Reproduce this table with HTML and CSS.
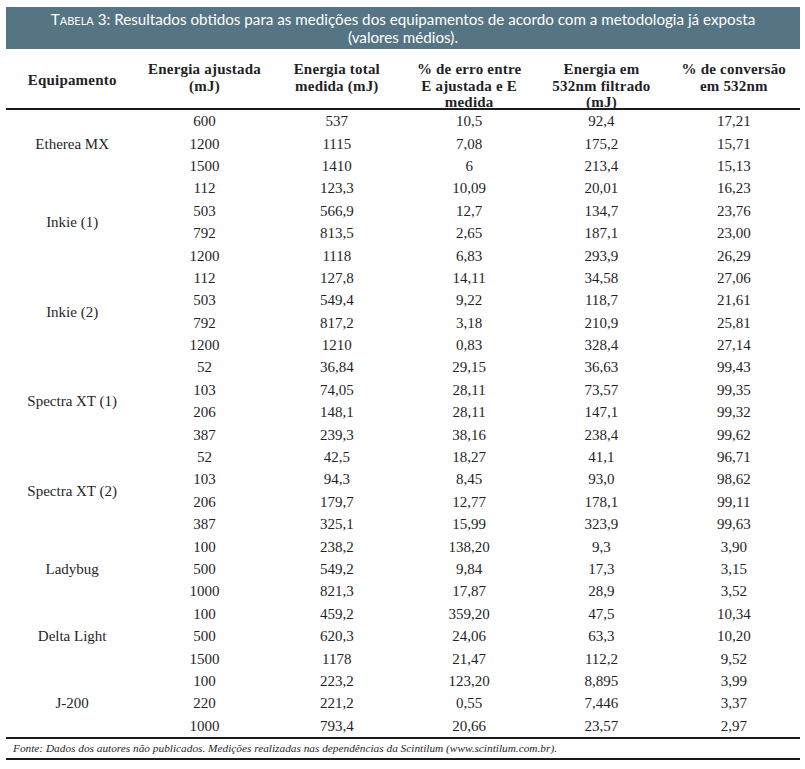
FILE: index.html
```html
<!DOCTYPE html>
<html lang="pt">
<head>
<meta charset="utf-8">
<title>Tabela 3</title>
<link rel="stylesheet" href="styles.css">
</head>
<body>
<div class="wrap">
  <div class="titlebar"><span class="sc">Tabela 3:</span> Resultados obtidos para as medições dos equipamentos de acordo com a metodologia já exposta<br>(valores médios).</div>
  <table class="data">
    <colgroup><col><col><col><col><col><col></colgroup>
    <thead>
      <tr>
        <th><div class="hd equip">Equipamento</div></th>
        <th><div class="hd">Energia ajustada<br>(mJ)</div></th>
        <th><div class="hd">Energia total<br>medida (mJ)</div></th>
        <th><div class="hd">% de erro entre<br>E ajustada e E<br>medida</div></th>
        <th><div class="hd">Energia em<br>532nm filtrado<br>(mJ)</div></th>
        <th><div class="hd">% de conversão<br>em 532nm</div></th>
      </tr>
    </thead>
    <tbody>
      <tr><td rowspan="3">Etherea MX</td><td>600</td><td>537</td><td>10,5</td><td>92,4</td><td>17,21</td></tr>
      <tr><td>1200</td><td>1115</td><td>7,08</td><td>175,2</td><td>15,71</td></tr>
      <tr><td>1500</td><td>1410</td><td>6</td><td>213,4</td><td>15,13</td></tr>
      <tr><td rowspan="4">Inkie (1)</td><td>112</td><td>123,3</td><td>10,09</td><td>20,01</td><td>16,23</td></tr>
      <tr><td>503</td><td>566,9</td><td>12,7</td><td>134,7</td><td>23,76</td></tr>
      <tr><td>792</td><td>813,5</td><td>2,65</td><td>187,1</td><td>23,00</td></tr>
      <tr><td>1200</td><td>1118</td><td>6,83</td><td>293,9</td><td>26,29</td></tr>
      <tr><td rowspan="4">Inkie (2)</td><td>112</td><td>127,8</td><td>14,11</td><td>34,58</td><td>27,06</td></tr>
      <tr><td>503</td><td>549,4</td><td>9,22</td><td>118,7</td><td>21,61</td></tr>
      <tr><td>792</td><td>817,2</td><td>3,18</td><td>210,9</td><td>25,81</td></tr>
      <tr><td>1200</td><td>1210</td><td>0,83</td><td>328,4</td><td>27,14</td></tr>
      <tr><td rowspan="4">Spectra XT (1)</td><td>52</td><td>36,84</td><td>29,15</td><td>36,63</td><td>99,43</td></tr>
      <tr><td>103</td><td>74,05</td><td>28,11</td><td>73,57</td><td>99,35</td></tr>
      <tr><td>206</td><td>148,1</td><td>28,11</td><td>147,1</td><td>99,32</td></tr>
      <tr><td>387</td><td>239,3</td><td>38,16</td><td>238,4</td><td>99,62</td></tr>
      <tr><td rowspan="4">Spectra XT (2)</td><td>52</td><td>42,5</td><td>18,27</td><td>41,1</td><td>96,71</td></tr>
      <tr><td>103</td><td>94,3</td><td>8,45</td><td>93,0</td><td>98,62</td></tr>
      <tr><td>206</td><td>179,7</td><td>12,77</td><td>178,1</td><td>99,11</td></tr>
      <tr><td>387</td><td>325,1</td><td>15,99</td><td>323,9</td><td>99,63</td></tr>
      <tr><td rowspan="3">Ladybug</td><td>100</td><td>238,2</td><td>138,20</td><td>9,3</td><td>3,90</td></tr>
      <tr><td>500</td><td>549,2</td><td>9,84</td><td>17,3</td><td>3,15</td></tr>
      <tr><td>1000</td><td>821,3</td><td>17,87</td><td>28,9</td><td>3,52</td></tr>
      <tr><td rowspan="3">Delta Light</td><td>100</td><td>459,2</td><td>359,20</td><td>47,5</td><td>10,34</td></tr>
      <tr><td>500</td><td>620,3</td><td>24,06</td><td>63,3</td><td>10,20</td></tr>
      <tr><td>1500</td><td>1178</td><td>21,47</td><td>112,2</td><td>9,52</td></tr>
      <tr><td rowspan="3">J-200</td><td>100</td><td>223,2</td><td>123,20</td><td>8,895</td><td>3,99</td></tr>
      <tr><td>220</td><td>221,2</td><td>0,55</td><td>7,446</td><td>3,37</td></tr>
      <tr><td>1000</td><td>793,4</td><td>20,66</td><td>23,57</td><td>2,97</td></tr>
    </tbody>
    <tfoot>
      <tr><td colspan="6" class="source">Fonte: Dados dos autores não publicados. Medições realizadas nas dependências da Scintilum (www.scintilum.com.br).</td></tr>
    </tfoot>
  </table>
</div>
</body>
</html>
```

FILE: styles.css
```css
html, body {
  margin: 0;
  padding: 0;
  background: #ffffff;
}

.wrap {
  width: 794px;
  padding: 7px 0 0 6px;
}

.titlebar {
  background: #567584;
  color: #ffffff;
  font-family: Lato, "Open Sans", sans-serif;
  font-size: 15.2px;
  line-height: 18px;
  text-align: center;
  height: 42px;
  box-sizing: border-box;
  padding-top: 3px;
}

.sc {
  font-variant: small-caps;
}

.data {
  width: 794px;
  border-collapse: collapse;
  table-layout: fixed;
  font-family: "Liberation Serif", "Times New Roman", serif;
  color: #1f1f28;
}

.data th {
  font-size: 15px;
  font-weight: bold;
  line-height: 16.5px;
  padding: 12px 0 0 0;
  vertical-align: top;
  border-bottom: 2px solid #1a1a1a;
}

.hd {
  height: 47px;
  letter-spacing: 0.2px;
}

.hd.equip {
  box-sizing: border-box;
  padding-top: 11px;
}

.data td {
  font-size: 15px;
  line-height: 18px;
  height: 22.4px;
  padding: 0;
  text-align: center;
  vertical-align: middle;
}

.data tfoot td {
  border-top: 2px solid #1a1a1a;
  border-bottom: 2px solid #1a1a1a;
  text-align: left;
  font-style: italic;
  font-size: 11.3px;
  line-height: 17px;
  height: 19px;
  padding-left: 7px;
}
```
